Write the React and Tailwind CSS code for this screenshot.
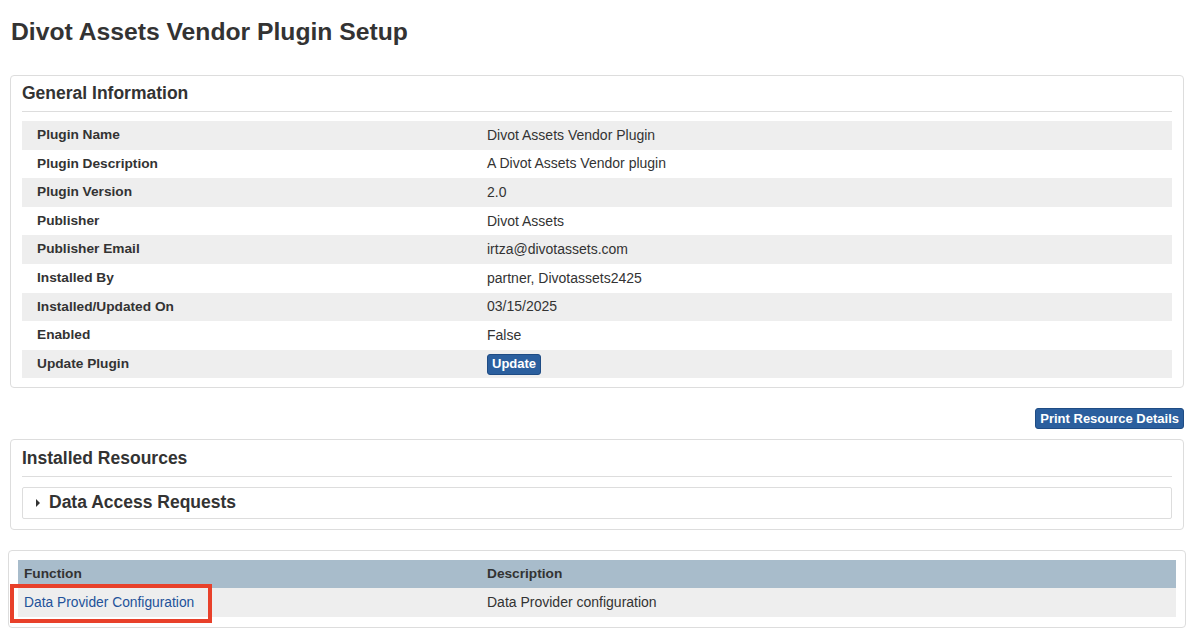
const info = [
  ['Plugin Name', 'Divot Assets Vendor Plugin'],
  ['Plugin Description', 'A Divot Assets Vendor plugin'],
  ['Plugin Version', '2.0'],
  ['Publisher', 'Divot Assets'],
  ['Publisher Email', 'irtza@divotassets.com'],
  ['Installed By', 'partner, Divotassets2425'],
  ['Installed/Updated On', '03/15/2025'],
  ['Enabled', 'False'],
  ['Update Plugin', null],
];

const App = () => {
  return (
    <div className="w-[1200px] h-[635px] bg-white text-[#333] font-['Liberation_Sans',Arial,sans-serif] overflow-hidden">
      <h1 className="pl-[11px] pt-[18px] h-[75px] text-[24.7px] leading-[28px] font-bold">Divot Assets Vendor Plugin Setup</h1>

      {/* General information */}
      <div className="mx-[10px] w-[1174px] h-[313px] border border-[#ddd] rounded-[4px] px-[11px]">
        <h2 className="pt-[6px] h-[36px] text-[17.5px] leading-[22px] font-bold border-b border-[#ddd]">General Information</h2>
        <div className="mt-[9px] flex flex-col text-[14px]">
          {info.map(([label, value], i) => (
            <div key={label} className={`flex items-center h-[28.6px] ${i % 2 === 0 ? 'bg-[#eee]' : 'bg-white'}`}>
              <div className="w-[465px] pl-[15px] font-bold text-[13.7px]">{label}</div>
              <div>
                {value !== null ? value : (
                  <button className="h-[21px] px-[4px] bg-[#2b5f9e] border border-[#1f4c84] text-white font-bold rounded-[3px] text-[13px] leading-[18px]">Update</button>
                )}
              </div>
            </div>
          ))}
        </div>
      </div>

      <div className="flex justify-end pr-[16px] mt-[20px]">
        <button className="h-[21px] px-[4px] bg-[#2b5f9e] border border-[#1f4c84] text-white font-bold rounded-[3px] text-[13px] leading-[18px]">Print Resource Details</button>
      </div>

      {/* Installed resources */}
      <div className="mt-[10px] mx-[10px] w-[1174px] h-[91px] border border-[#ddd] rounded-[4px] px-[11px]">
        <h2 className="pt-[7px] h-[37px] text-[17.5px] leading-[22px] font-bold border-b border-[#ddd]">Installed Resources</h2>
        <div className="mt-[10px] h-[32px] border border-[#ddd] rounded-[2px] flex items-center pl-[12px] gap-[8px]">
          <svg width="6" height="8" viewBox="0 0 6 8"><path d="M1 0 L5 4 L1 8 Z" fill="#333" /></svg>
          <span className="text-[17.5px] font-bold leading-[22px] -mt-[3px]">Data Access Requests</span>
        </div>
      </div>

      {/* Functions */}
      <div className="relative mt-[20px] mx-[8px] w-[1178px] h-[78px] border border-[#ddd] rounded-[4px] px-[9px] pt-[9px]">
        <div className="text-[14px]">
          <div className="flex items-center h-[28px] bg-[#a8bccb] font-bold">
            <div className="w-[469px] pl-[6px] text-[13.7px]">Function</div>
            <div className="text-[13.7px]">Description</div>
          </div>
          <div className="flex items-center h-[29px] bg-[#eee]">
            <div className="w-[469px] pl-[6px]"><a className="text-[#22529a] text-[13.8px]">Data Provider Configuration</a></div>
            <div>Data Provider configuration</div>
          </div>
        </div>
        <div className="absolute left-[1px] top-[33px] w-[202px] h-[39px] border-[4px] border-[#e8402a]"></div>
      </div>
    </div>
  );
};

export default App;
